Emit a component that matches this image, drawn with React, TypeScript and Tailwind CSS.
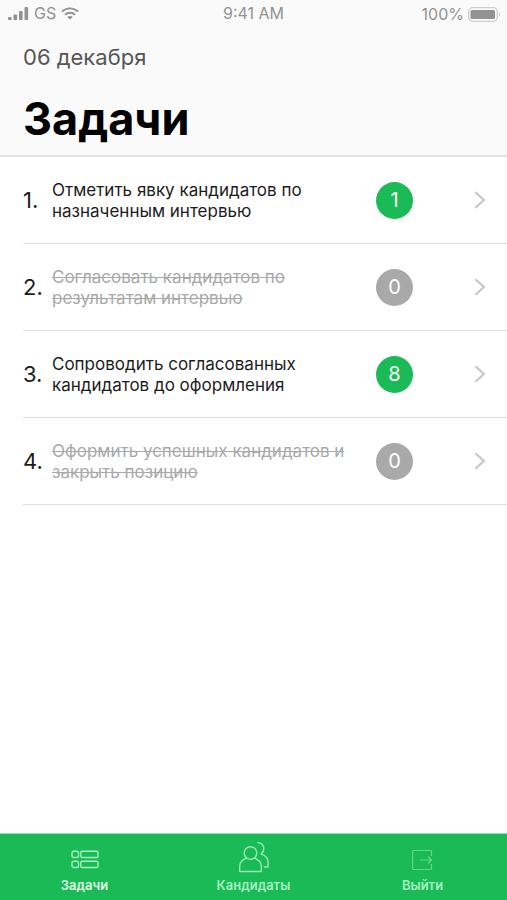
import { clsx } from "clsx";

const TASKS = [
  { id: 1, title: "Отметить явку кандидатов по назначенным интервью", count: 1 },
  { id: 2, title: "Согласовать кандидатов по результатам интервью", count: 0 },
  { id: 3, title: "Сопроводить согласованных кандидатов до оформления", count: 8 },
  { id: 4, title: "Оформить успешных кандидатов и закрыть позицию", count: 0 },
];

function SignalIcon() {
  return (
    <svg width="21" height="14" viewBox="0 0 21 14" fill="currentColor" aria-hidden="true">
      <rect x="0" y="11" width="3.6" height="3" rx="1" />
      <rect x="5.5" y="8.5" width="3.6" height="5.5" rx="1" />
      <rect x="11" y="5" width="3.6" height="9" rx="1" />
      <rect x="16.5" y="1" width="3.6" height="13" rx="1" />
    </svg>
  );
}

function WifiIcon() {
  return (
    <svg width="18" height="13" viewBox="0 0 18 13" fill="none" stroke="currentColor" strokeWidth="1.9" aria-hidden="true">
      <path d="M1 4.7C5.5.2 12.5.2 17 4.7" />
      <path d="M4 7.7c2.8-2.7 7.2-2.7 10 0" />
      <path d="M6.3 9.9c1.6-1.3 3.8-1.3 5.4 0L9 12.6z" fill="currentColor" stroke="none" />
    </svg>
  );
}

function BatteryIcon() {
  return (
    <svg width="33" height="15" viewBox="0 0 33 15" aria-hidden="true">
      <rect x="0.7" y="0.7" width="28.6" height="13.6" rx="4" fill="none" stroke="#cdcdcd" strokeWidth="1.3" />
      <rect x="2.5" y="3" width="24.5" height="9" rx="1.5" fill="#929292" />
      <path d="M31 5.5c1.6.6 1.6 3.4 0 4z" fill="#cdcdcd" />
    </svg>
  );
}

function ChevronIcon() {
  return (
    <svg width="12" height="18" viewBox="0 0 12 18" fill="none" stroke="#c7c7cb" strokeWidth="2.2" aria-hidden="true">
      <path d="M1.5 1.2 9.8 9 1.5 16.8" />
    </svg>
  );
}

function TasksIcon() {
  return (
    <svg width="28" height="32" viewBox="0 -9 28 32" fill="none" stroke="currentColor" strokeWidth="1.4" aria-hidden="true">
      <rect x="1" y="1.2" width="6.5" height="6.3" rx="1.8" />
      <rect x="9.8" y="1.2" width="17.2" height="6.3" rx="1.2" />
      <rect x="1" y="11.2" width="6.5" height="6.3" rx="1.8" />
      <rect x="9.8" y="11.2" width="17.2" height="6.3" rx="1.2" />
    </svg>
  );
}

function CandidatesIcon() {
  return (
    <svg width="32" height="32" viewBox="0 0 32 32" fill="none" stroke="currentColor" strokeWidth="1.4" strokeLinecap="round" strokeLinejoin="round" aria-hidden="true">
      <circle cx="12.5" cy="12" r="6.3" />
      <path d="M8.5 17.2C4 19 1.7 21.500 1.7 25v5.500h21.600V25c0-3.500-2.300-6-6.800-7.800" />
      <path d="M20 1.8c3.400-.2 5.800 2.400 5.800 5.700 0 2.300-1 4.200-2.800 5.300 4.300 1.500 7 4 7 7.700v5.500h-3.700" />
    </svg>
  );
}

function ExitIcon() {
  return (
    <svg width="22" height="32" viewBox="0 -8 22 32" fill="none" stroke="currentColor" strokeWidth="1.2" strokeLinejoin="round" aria-hidden="true">
      <path d="M19.5 7V2.5a1 1 0 0 0-1-1h-17a1 1 0 0 0-1 1v17a1 1 0 0 0 1 1h17a1 1 0 0 0 1-1V15" />
      <path d="M8 11h11.5M16 7.500l3.500 3.500-3.500 3.500" />
    </svg>
  );
}

const TABS = [
  { label: "Задачи", icon: <TasksIcon />, text: "text-[#e0f9e8]", tint: "text-[#a5eebe]" },
  { label: "Кандидаты", icon: <CandidatesIcon />, text: "text-[#a6efc0]", tint: "text-[#96e8b2]" },
  { label: "Выйти", icon: <ExitIcon />, text: "text-[#a6efc0]", tint: "text-[#62d68a]" },
];

export default function App() {
  return (
    <div className="flex min-h-screen flex-col bg-white font-['Inter',sans-serif]">
      <header className="border-b-2 border-[#e4e4e5] bg-[#fafafa]">
        <div className="grid h-[26px] grid-cols-3 items-center px-2 text-base text-[#929292]">
          <div className="flex items-center gap-[5px]">
            <SignalIcon />
            <span>GS</span>
            <WifiIcon />
          </div>
          <span className="text-center">9:41 AM</span>
          <div className="-mr-0.5 flex items-center justify-end gap-1 pt-0.5">
            <span>100%</span>
            <BatteryIcon />
          </div>
        </div>
        <div className="px-[23px] pt-[17px] pb-2">
          <p className="text-[22px] leading-7 text-[#565656]">06 декабря</p>
          <h1 className="mt-5 text-[45px] leading-14 font-bold text-black">Задачи</h1>
        </div>
      </header>

      <main className="flex-1">
        <ol>
          {TASKS.map((task) => (
            <li key={task.id} className="ml-[23px] border-b border-[#dedede]">
              <a href={`#task-${task.id}`} className="flex h-[86px] items-center pr-[21px]">
                <span className="w-[29px] shrink-0 text-[22px] text-[#1c1c1c]">{task.id}.</span>
                <span
                  className={clsx(
                    "w-[312px] pt-0.5 text-[17px] leading-[21px]",
                    task.count ? "text-[#1c1c1c]" : "text-[#a9a9a9] line-through",
                  )}
                >
                  {task.title}
                </span>
                <span
                  className={clsx(
                    "ml-3 flex size-[37px] shrink-0 items-center justify-center rounded-full text-xl text-white",
                    task.count ? "bg-[#1abb57]" : "bg-[#a9a9a9]",
                  )}
                >
                  {task.count}
                </span>
                <span className="ml-auto">
                  <ChevronIcon />
                </span>
              </a>
            </li>
          ))}
        </ol>
      </main>

      <nav className="grid h-[67px] grid-cols-3 border-t border-[#8edcab] bg-[#1abb57]">
        {TABS.map((tab) => (
          <a key={tab.label} href="#" className="flex flex-col items-center pt-[7px]">
            <span className={tab.tint}>{tab.icon}</span>
            <span className={clsx("mt-1 text-[13px] leading-4 font-semibold", tab.text)}>{tab.label}</span>
          </a>
        ))}
      </nav>
    </div>
  );
}
